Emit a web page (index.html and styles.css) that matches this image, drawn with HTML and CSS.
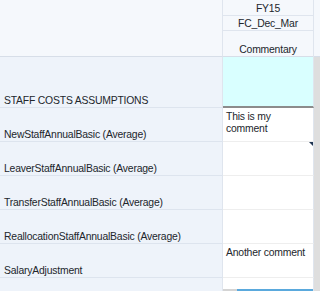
FILE: index.html
```html
<!DOCTYPE html>
<html>
<head>
<meta charset="utf-8">
<link rel="stylesheet" href="styles.css">
</head>
<body>
<div class="sheet">
  <div class="corner"></div>
  <div class="col-head">
    <div class="hcell h-year">FY15</div>
    <div class="hcell h-scen">FC_Dec_Mar</div>
    <div class="hcell h-col">Commentary</div>
  </div>
  <div class="edge edge-head"></div>

  <div class="label row-tall">STAFF COSTS ASSUMPTIONS</div>
  <div class="value section"></div>
  <div class="edge"></div>

  <div class="label">NewStaffAnnualBasic (Average)</div>
  <div class="value">This is my comment</div>
  <div class="edge"></div>

  <div class="label">LeaverStaffAnnualBasic (Average)</div>
  <div class="value has-note"></div>
  <div class="edge"></div>

  <div class="label">TransferStaffAnnualBasic (Average)</div>
  <div class="value"></div>
  <div class="edge"></div>

  <div class="label">ReallocationStaffAnnualBasic (Average)</div>
  <div class="value"></div>
  <div class="edge"></div>

  <div class="label">SalaryAdjustment</div>
  <div class="value">Another comment</div>
  <div class="edge"></div>

  <div class="label last"></div>
  <div class="value last"><div class="hscroll"><span class="thumb"></span></div></div>
  <div class="edge last"></div>
</div>
</body>
</html>
```

FILE: styles.css
```css
html, body {
  margin: 0;
  padding: 0;
  background: #ffffff;
}

.sheet {
  display: grid;
  grid-template-columns: 223px 91px 1fr;
  grid-template-rows: 57px 51px 34px 34px 34px 34px 34px 1fr;
  height: 291px;
  width: 320px;
  overflow: hidden;
  font-family: "Liberation Sans", Arial, sans-serif;
  font-size: 10.4px;
  letter-spacing: -0.2px;
  color: #22262c;
}

.corner {
  background: #f5f8fc;
  border-right: 1px solid #dfe5ee;
  border-bottom: 1px solid #d7dee8;
}

.col-head {
  display: grid;
  grid-template-rows: 16px 15px 26px;
  background: #f5f8fc;
  border-right: 1px solid #dfe5ee;
}

.hcell {
  border-bottom: 1px solid #dfe5ee;
  text-align: center;
  line-height: 14px;
}

.h-year { padding-top: 3px; line-height: 12px; }
.h-scen { padding-top: 2px; line-height: 12px; }
.h-col {
  display: flex;
  align-items: flex-end;
  justify-content: center;
  line-height: 12px;
  padding-bottom: 0;
  border-bottom-color: #d7dee8;
}

.edge {
  background: #dedede;
}
.edge-head {
  background: #f5f8fc;
  border-bottom: 1px solid #d7dee8;
}

.label {
  background: #eef3fa;
  border-right: 1px solid #dfe5ee;
  border-bottom: 1px solid #dde4ee;
  display: flex;
  align-items: flex-end;
  padding: 0 0 0 4px;
  white-space: nowrap;
  overflow: hidden;
  line-height: 12px;
}

.value {
  position: relative;
  background: #ffffff;
  border-right: 1px solid #dfe5ee;
  border-bottom: 1px solid #eeeeee;
  padding: 3px 2px 0 3px;
  line-height: 12px;
  overflow: hidden;
}

.value.section {
  background: #d9ffff;
  border-bottom: 2px solid #8c8c8c;
}

/* note marker in the top-right corner of a cell */
.value.has-note::after {
  content: "";
  position: absolute;
  top: 0;
  right: 0;
  border-top: 4px solid #1f3553;
  border-left: 4px solid transparent;
}

.last {
  border-bottom: none;
}

.hscroll {
  position: absolute;
  left: 0;
  right: -8px;
  bottom: 0;
  height: 2px;
  background: #d4d4d4;
}
.hscroll .thumb {
  position: absolute;
  left: 14px;
  right: 0;
  top: 0;
  bottom: 0;
  background: #5aa9dd;
}
```
